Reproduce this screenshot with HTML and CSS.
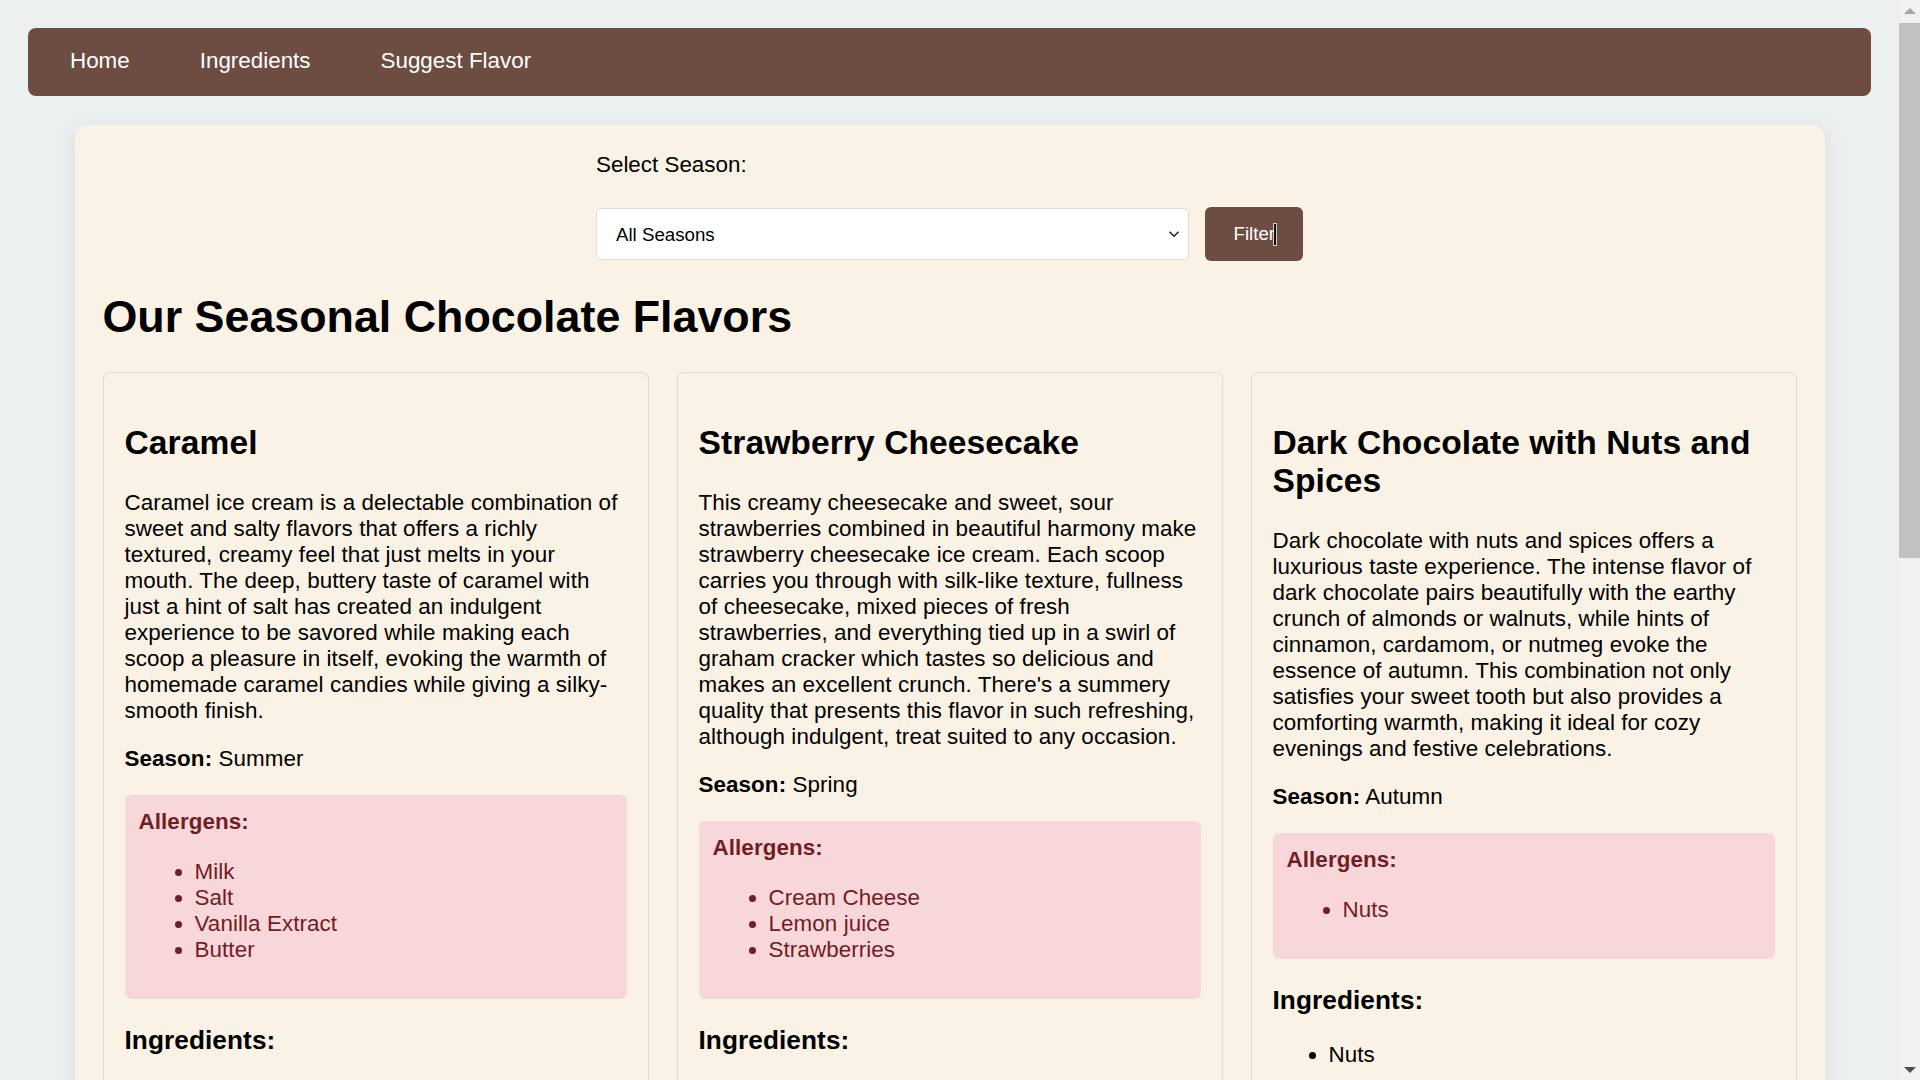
FILE: index.html
```html
<!DOCTYPE html>
<html lang="en">
<head>
<meta charset="UTF-8">
<title>Seasonal Chocolate Flavors</title>
<link rel="stylesheet" href="styles.css">
</head>
<body>
<div class="page">
<nav class="navbar">
  <a class="nav-link" href="#">Home</a>
  <a class="nav-link" href="#">Ingredients</a>
  <a class="nav-link" href="#">Suggest Flavor</a>
</nav>

<main class="container">
  <form class="filter-form">
    <label class="filter-label" for="season">Select Season:</label>
    <div class="filter-row">
      <div class="select-wrap">
        <select id="season" class="filter-select">
          <option>All Seasons</option>
          <option>Spring</option>
          <option>Summer</option>
          <option>Autumn</option>
          <option>Winter</option>
        </select>
        <svg class="select-arrow" width="12" height="8" viewBox="0 0 12 8" aria-hidden="true"><path d="M1.5 1.8 L6 6.2 L10.5 1.8" fill="none" stroke="#222" stroke-width="1.6"/></svg>
      </div>
      <button type="button" class="filter-btn">Filter<span class="cursor" aria-hidden="true"></span></button>
    </div>
  </form>

  <h1 class="page-title">Our Seasonal Chocolate Flavors</h1>

  <div class="flavor-grid">
    <article class="flavor-card">
      <h2>Caramel</h2>
      <p>Caramel ice cream is a delectable combination of sweet and salty flavors that offers a richly textured, creamy feel that just melts in your mouth. The deep, buttery taste of caramel with just a hint of salt has created an indulgent experience to be savored while making each scoop a pleasure in itself, evoking the warmth of homemade caramel candies while giving a silky-smooth finish.</p>
      <p><strong>Season:</strong> Summer</p>
      <div class="allergens">
        <h4>Allergens:</h4>
        <ul>
          <li>Milk</li>
          <li>Salt</li>
          <li>Vanilla Extract</li>
          <li>Butter</li>
        </ul>
      </div>
      <h3>Ingredients:</h3>
      <ul>
        <li>Milk</li>
        <li>Sugar</li>
        <li>Caramel</li>
        <li>Salt</li>
        <li>Vanilla Extract</li>
        <li>Butter</li>
      </ul>
    </article>

    <article class="flavor-card">
      <h2>Strawberry Cheesecake</h2>
      <p>This creamy cheesecake and sweet, sour strawberries combined in beautiful harmony make strawberry cheesecake ice cream. Each scoop carries you through with silk-like texture, fullness of cheesecake, mixed pieces of fresh strawberries, and everything tied up in a swirl of graham cracker which tastes so delicious and makes an excellent crunch. There's a summery quality that presents this flavor in such refreshing, although indulgent, treat suited to any occasion.</p>
      <p><strong>Season:</strong> Spring</p>
      <div class="allergens">
        <h4>Allergens:</h4>
        <ul>
          <li>Cream Cheese</li>
          <li>Lemon juice</li>
          <li>Strawberries</li>
        </ul>
      </div>
      <h3>Ingredients:</h3>
      <ul>
        <li>Cream Cheese</li>
        <li>Strawberries</li>
        <li>Graham Crackers</li>
        <li>Sugar</li>
        <li>Lemon juice</li>
      </ul>
    </article>

    <article class="flavor-card">
      <h2>Dark Chocolate with Nuts and Spices</h2>
      <p>Dark chocolate with nuts and spices offers a luxurious taste experience. The intense flavor of dark chocolate pairs beautifully with the earthy crunch of almonds or walnuts, while hints of cinnamon, cardamom, or nutmeg evoke the essence of autumn. This combination not only satisfies your sweet tooth but also provides a comforting warmth, making it ideal for cozy evenings and festive celebrations.</p>
      <p><strong>Season:</strong> Autumn</p>
      <div class="allergens">
        <h4>Allergens:</h4>
        <ul>
          <li>Nuts</li>
        </ul>
      </div>
      <h3>Ingredients:</h3>
      <ul>
        <li>Nuts</li>
      </ul>
    </article>
  </div>
</main>
</div>

<div class="scrollbar" aria-hidden="true">
  <div class="sb-btn">
    <svg width="12" height="6" viewBox="0 0 12 6"><polygon points="0,6 6,0 12,6" fill="#a3a3a3"/></svg>
  </div>
  <div class="sb-track">
    <div class="sb-thumb"></div>
  </div>
  <div class="sb-btn">
    <svg width="12" height="6" viewBox="0 0 12 6"><polygon points="0,0 12,0 6,6" fill="#505050"/></svg>
  </div>
</div>
</body>
</html>
```

FILE: styles.css
```css
html,
body {
  height: 100%;
  margin: 0;
  overflow: hidden;
  background: #ecf0f1;
}

body {
  display: flex;
  font-family: "Liberation Sans", Arial, sans-serif;
  font-size: 22.4px;
  color: #000;
}

.page {
  flex: 1;
  min-width: 0;
  height: 100vh;
  box-sizing: border-box;
  overflow: hidden;
  padding: 28px;
}

/* Window scrollbar */
.scrollbar {
  flex: none;
  width: 21px;
  height: 100vh;
  display: flex;
  flex-direction: column;
  background: #f1f1f1;
}

.sb-btn {
  flex: none;
  height: 21px;
  display: flex;
  align-items: center;
  justify-content: center;
}

.sb-track {
  flex: 1;
  padding-top: 2px;
}

.sb-thumb {
  height: 535px;
  background: #c1c1c1;
}

/* Navbar */
.navbar {
  display: flex;
  align-items: center;
  gap: 14px;
  height: 68px;
  padding: 0 14px;
  background: #6d4c41;
  border-radius: 8px;
}

.nav-link {
  padding: 0 28px 2px;
  color: #fff;
  text-decoration: none;
  font-size: 22.4px;
}

/* Container */
.container {
  max-width: 1750px;
  box-sizing: border-box;
  margin: 29px auto 0;
  padding: 27px 28px 28px;
  background: #f9f2e5;
  border-radius: 14px;
  box-shadow: 0 4px 22px rgba(0, 0, 0, 0.09);
}

/* Filter form */
.filter-form {
  width: 707px;
  margin: 0 auto;
}

.filter-label {
  display: block;
  margin-bottom: 29px;
  font-size: 22.4px;
}

.filter-row {
  display: flex;
  align-items: center;
  gap: 16px;
}

.select-wrap {
  position: relative;
  flex: 1;
  display: flex;
}

.filter-select {
  flex: 1;
  height: 52px;
  padding: 0 40px 0 19px;
  font-family: "Liberation Sans", Arial, sans-serif;
  font-size: 18.7px;
  color: #000;
  background: #fff;
  border: 1px solid #dcdcdc;
  border-radius: 5px;
  appearance: none;
  -webkit-appearance: none;
}

.select-arrow {
  position: absolute;
  right: 9px;
  top: 22px;
  pointer-events: none;
}

.filter-btn {
  position: relative;
  height: 54px;
  padding: 0 28px;
  font-family: "Liberation Sans", Arial, sans-serif;
  font-size: 18.7px;
  color: #fff;
  background: #6d4c41;
  border: none;
  border-radius: 6px;
}

.cursor {
  position: absolute;
  left: 69px;
  top: 17px;
  width: 2px;
  height: 21px;
  background: #111;
  box-shadow: 0 0 0 1px rgba(255, 255, 255, 0.7);
}

/* Title */
.page-title {
  margin: 30px 0;
  font-size: 44.8px;
  font-weight: bold;
}

/* Cards */
.flavor-grid {
  display: grid;
  grid-template-columns: repeat(3, 1fr);
  gap: 28px;
}

.flavor-card {
  padding: 23px 21px 21px;
  border: 1px solid rgba(0, 0, 0, 0.09);
  border-radius: 7px;
  background: #f9f2e5;
  letter-spacing: 0.08px;
}

.flavor-card h2 {
  margin: 27.9px 0;
  font-size: 33.6px;
}

.flavor-card p {
  margin: 22.4px 0;
}

.flavor-card h3 {
  margin: 26.2px 0;
  font-size: 26.2px;
}

.flavor-card ul {
  margin: 22.4px 0;
  padding-left: 56px;
}

.allergens {
  padding: 14px 14px 14px;
  background: #f8d7da;
  color: #721c24;
  border-radius: 6px;
}

.allergens ul {
  margin-top: 24px;
}

.allergens h4 {
  margin: 0;
  font-size: 22.4px;
}
```
